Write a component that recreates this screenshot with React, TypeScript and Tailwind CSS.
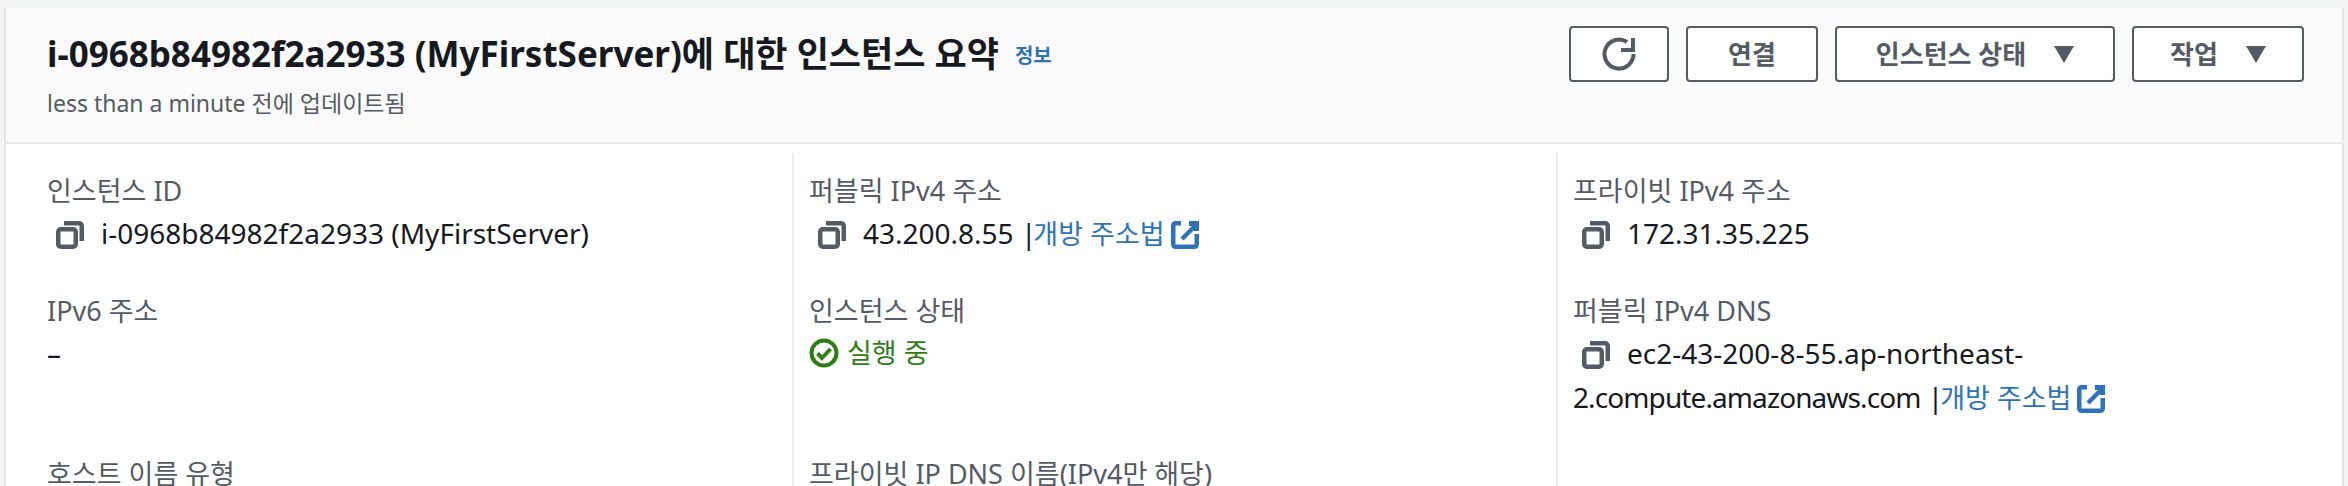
const font = "font-['Noto_Sans','Noto_Sans_CJK_KR',sans-serif]";

function CopyIcon() {
	return (
		<svg className="w-[28px] h-[28px] inline-block align-[-5px] ml-[9px] mr-[17px]" viewBox="0 0 28 28" fill="none" stroke="#545b64" strokeWidth="4.5">
			<rect x="2.25" y="8.25" width="17.5" height="17.5" rx="2.5" />
			<path d="M8 2.25h15.25a2.5 2.5 0 0 1 2.5 2.5V20" />
		</svg>
	);
}

function ExternalIcon() {
	return (
		<svg className="w-[28px] h-[28px] inline-block align-[-5px] ml-[6px]" viewBox="0 0 28 28" fill="none" stroke="#2e73b8" strokeWidth="4.5">
			<path d="M10 2.25H4.5a2.25 2.25 0 0 0-2.25 2.25v19a2.25 2.25 0 0 0 2.25 2.25h19a2.25 2.25 0 0 0 2.25-2.25V13" />
			<path d="M18 2.5h7.5V10" strokeWidth="5" />
			<path d="M11 18 24 5" />
		</svg>
	);
}

function Caret() {
	return <span className="w-0 h-0 border-x-[10px] border-x-transparent border-t-[17px] border-t-[#545b64]" />;
}

function Field({ label, children }: { label: string; children?: React.ReactNode }) {
	return (
		<div className="pt-[22px]">
			<div className="text-[27px] leading-[32px] text-[#545b64]">{label}</div>
			<div className="mt-[4px] text-[28px] leading-[44px] text-[#16191f]">{children}</div>
		</div>
	);
}

function Link() {
	return <a className="-ml-[3px] text-[27px] text-[#2e73b8]">개방 주소법</a>;
}

const btn = "h-[56px] flex items-center justify-center border-2 border-[#545b64] rounded-[4px] bg-white text-[26px] font-semibold text-[#545b64]";
const cell = "border-l-2 border-[#eaeded] pl-[15px]";

export default function App() {
	return (
		<div className={`${font} w-[2348px] h-[486px] overflow-hidden bg-[#f2f3f3] pt-[8px] pl-[4px] pr-[4px]`}>
			<div className="bg-white h-[600px] border-x-2 border-[#e4e4e4]">
				<div className="h-[136px] bg-[#fafafa] border-b-2 border-[#e9ebed] flex justify-between pl-[41px] pr-[38px]">
					<div>
						<div className="mt-[22px] flex items-center gap-[16px]">
							<h1 className="text-[35px] leading-[48px] font-bold text-[#16191f]">i-0968b84982f2a2933 (MyFirstServer)에 대한 인스턴스 요약</h1>
							<a className="text-[20px] font-semibold text-[#2e73b8] mt-[4px]">정보</a>
						</div>
						<p className="mt-[11px] text-[23px] leading-[28px] text-[#545b64]">less than a minute 전에 업데이트됨</p>
					</div>
					<div className="mt-[18px] flex gap-[17px]">
						<button className={`${btn} w-[100px]`}>
							<svg className="w-[36px] h-[36px]" viewBox="0 0 36 36" fill="none" stroke="#545b64" strokeWidth="4">
								<path d="M26 6A14.5 14.5 0 1 0 32.5 18" />
								<path d="M32 2v12H20" />
							</svg>
						</button>
						<button className={`${btn} w-[132px]`}>연결</button>
						<button className={`${btn} w-[280px] gap-[28px]`}>인스턴스 상태 <Caret /></button>
						<button className={`${btn} w-[172px] gap-[28px]`}>작업 <Caret /></button>
					</div>
				</div>
				<div className="mt-[9px] grid grid-cols-[786px_764px_1fr] grid-rows-[120px_163px_auto]">
					<div className="pl-[41px]">
						<Field label="인스턴스 ID"><CopyIcon />i-0968b84982f2a2933 (MyFirstServer)</Field>
					</div>
					<div className={cell}>
						<Field label="퍼블릭 IPv4 주소"><CopyIcon />43.200.8.55 |<Link /><ExternalIcon /></Field>
					</div>
					<div className={cell}>
						<Field label="프라이빗 IPv4 주소"><CopyIcon />172.31.35.225</Field>
					</div>
					<div className="pl-[41px]">
						<Field label="IPv6 주소">–</Field>
					</div>
					<div className={cell}>
						<Field label="인스턴스 상태">
							<span className="flex items-center gap-[8px] text-[27px] text-[#2f7d14]">
								<svg className="w-[30px] h-[30px]" viewBox="0 0 30 30" fill="none" stroke="#2f7d14" strokeWidth="4">
									<circle cx="15" cy="15" r="12.5" />
									<path d="M8.5 15.5 13 20l8.5-9" />
								</svg>
								실행 중
							</span>
						</Field>
					</div>
					<div className={cell}>
						<Field label="퍼블릭 IPv4 DNS">
							<div className="max-w-[640px]">
								<CopyIcon />
								ec2-43-200-8-55.ap-northeast-
								<span className="tracking-[-0.9px]">2.compute.amazonaws.com</span> |<Link /><ExternalIcon />
							</div>
						</Field>
					</div>
					<div className="pl-[41px]">
						<Field label="호스트 이름 유형" />
					</div>
					<div className={cell}>
						<Field label="프라이빗 IP DNS 이름(IPv4만 해당)" />
					</div>
					<div className={cell} />
				</div>
			</div>
		</div>
	);
}
